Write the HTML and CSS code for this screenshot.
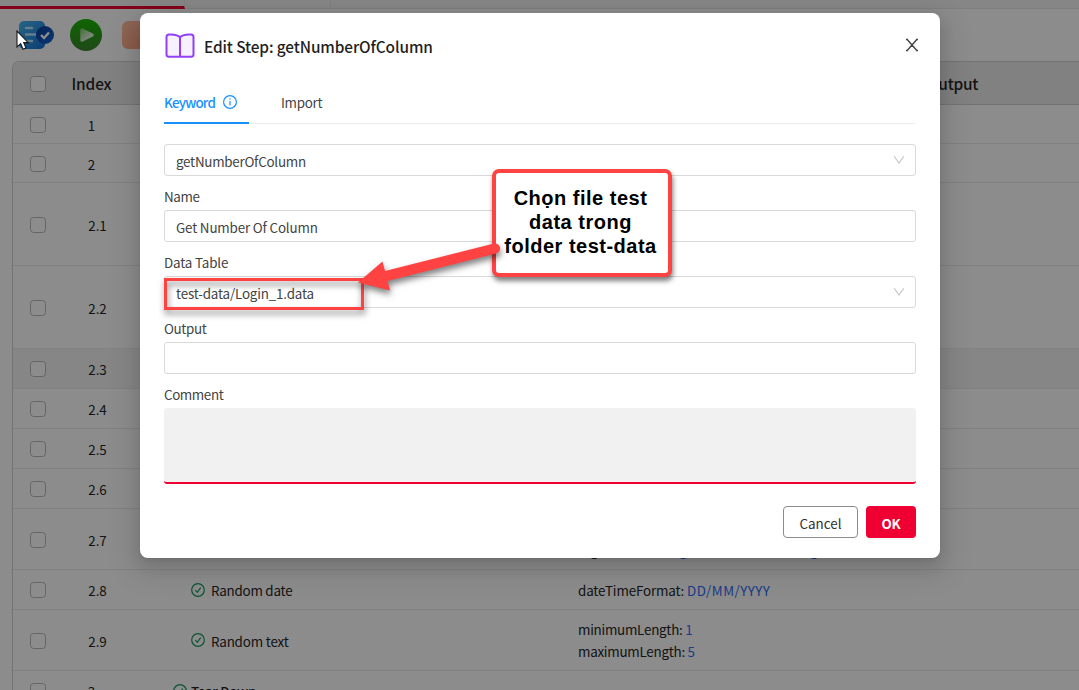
FILE: index.html
```html
<!DOCTYPE html>
<html lang="en">
<head>
<meta charset="utf-8">
<title>Edit Step</title>
<link rel="stylesheet" href="styles.css">
</head>
<body>
<svg class="defs" width="0" height="0">
  <defs>
    <linearGradient id="doc" x1="0" y1="0" x2="1" y2="1"><stop offset="0" stop-color="#48b8f0"/><stop offset="1" stop-color="#1370d6"/></linearGradient>
    <linearGradient id="badge" x1="0" y1="0" x2="1" y2="1"><stop offset="0" stop-color="#0a3f94"/><stop offset="1" stop-color="#1565d8"/></linearGradient>
    <linearGradient id="run" x1="0" y1="0" x2="0" y2="1"><stop offset="0" stop-color="#18b800"/><stop offset="1" stop-color="#3c8530"/></linearGradient>
    <linearGradient id="tri" x1="0" y1="0" x2="1" y2="1"><stop offset="0" stop-color="#8fd080"/><stop offset="1" stop-color="#ffffff"/></linearGradient>
    <symbol id="check" viewBox="0 0 14 14"><circle cx="7" cy="7" r="6.3"/><path d="M4.3 7.1 6.3 9.3 9.7 4.6"/></symbol>
    <symbol id="down" viewBox="0 0 12 10"><path d="M1.2 1.2 6 8 10.8 1.2"/></symbol>
  </defs>
</svg>
<div class="app">
  <div class="tabstrip"><span class="tab current"></span><span class="tab"></span></div>
  <div class="toolbar">
    <svg width="36" height="30" viewBox="0 0 36 30">
      <rect x="1" y="1" width="26" height="28" rx="5" fill="url(#doc)"/>
      <path d="M8 8h6M8 14.5h10M8 21h6" stroke="#b8e4ff" stroke-width="2.4" stroke-linecap="round"/>
      <circle cx="27" cy="15" r="9" fill="url(#badge)"/>
      <path d="m23 15 3 3 5-5.5" fill="none" stroke="#fff" stroke-width="2.4"/>
    </svg>
    <svg width="32" height="32" viewBox="0 0 32 32">
      <circle cx="16" cy="16" r="16" fill="url(#run)"/>
      <path d="M12 11 22 16 12 21Z" fill="url(#tri)" stroke="url(#tri)" stroke-width="3.5" stroke-linejoin="round"/>
    </svg>
    <span class="stop"></span>
  </div>
  <div class="grid">
    <div class="row head"><i class="box"></i><b>Index</b><span></span><span></span><span class="out">Output</span></div>
    <div class="row r39"><i class="box"></i><b>1</b></div>
    <div class="row r39"><i class="box"></i><b>2</b></div>
    <div class="row r83"><i class="box"></i><b class="sub">2.1</b></div>
    <div class="row r83"><i class="box"></i><b class="sub">2.2</b></div>
    <div class="row r40 hover"><i class="box"></i><b class="sub">2.3</b></div>
    <div class="row r40"><i class="box"></i><b class="sub">2.4</b></div>
    <div class="row r40"><i class="box"></i><b class="sub">2.5</b></div>
    <div class="row r40"><i class="box"></i><b class="sub">2.6</b></div>
    <div class="row r61"><i class="box"></i><b class="sub">2.7</b><span></span><span class="args"><span>minimumLength: <em>1</em></span><span class="a-long">regionFormat: <em>length of the decimal lang</em></span></span></div>
    <div class="row r40"><i class="box"></i><b class="sub">2.8</b><span class="step"><svg class="ok"><use href="#check"/></svg><span class="t-date">Random date</span></span><span class="args"><span class="a-format">dateTimeFormat: <em>DD/MM/YYYY</em></span></span></div>
    <div class="row r61"><i class="box"></i><b class="sub">2.9</b><span class="step"><svg class="ok"><use href="#check"/></svg><span class="t-text">Random text</span></span><span class="args"><span class="a-min">minimumLength: <em>1</em></span><span class="a-max">maximumLength: <em>5</em></span></span></div>
    <div class="row r40"><i class="box"></i><b>3</b><span class="step top"><svg class="ok"><use href="#check"/></svg><span>Tear Down</span></span></div>
  </div>
</div>
<div class="mask"></div>
<div class="modal">
  <div class="title">
    <svg width="30" height="26" viewBox="0 0 30 26"><path d="M15 4.5C13.500 2 9.500 1.300 4 1.500 2.300 1.600 1.500 2.600 1.500 4V21.500C1.500 23 2.300 23.700 4 23.700H26C27.700 23.700 28.500 23 28.500 21.500V4C28.500 2.600 27.700 1.600 26 1.500 20.500 1.300 16.500 2 15 4.500ZM15 4.500V23.500" fill="#f6f0ff" stroke="#923ff8" stroke-width="2" stroke-linejoin="round"/></svg>
    <h1>Edit Step: getNumberOfColumn</h1>
    <svg class="close" width="14" height="14" viewBox="0 0 14 14"><path d="M2.200 1.500 11.800 12.500M11.800 1.500 2.200 12.500M1 1.500H3.200M10.800 1.500H13M1 12.500H3.200M10.800 12.500H13"/></svg>
  </div>
  <div class="tabs">
    <div class="t active"><span class="kw">Keyword</span><svg width="14" height="14" viewBox="0 0 14 14"><circle cx="7" cy="7" r="6.400"/><path d="M7 6v4.500M7 3.400v1.300"/></svg></div>
    <div class="t"><span class="imp">Import</span></div>
  </div>
  <div class="field"><span class="v1">getNumberOfColumn</span><svg class="arrow"><use href="#down"/></svg></div>
  <label class="l1">Name</label>
  <div class="field"><span class="v2">Get Number Of Column</span></div>
  <label class="l2">Data Table</label>
  <div class="field"><span class="v3">test-data/Login_1.data</span><svg class="arrow"><use href="#down"/></svg></div>
  <label class="l3">Output</label>
  <div class="field"></div>
  <label class="l4">Comment</label>
  <div class="area"></div>
  <div class="actions"><button class="cancel">Cancel</button><button class="primary">OK</button></div>
</div>
<div class="highlight"></div>
<div class="callout">Chọn file test<br>data trong<br>folder test-data</div>
<svg class="pointer" width="150" height="60" viewBox="350 240 150 60"><path d="M358 282.500 382.500 261.500 385 271 494 243.500A5 5 0 0 1 496 253.500L387.500 281 390 290.500Z"/></svg>
<svg class="cursor" width="16" height="22" viewBox="0 0 16 22"><path d="M1 1V17L4.700 13.600 7 19.200 10 18 7.700 12.600H12.300Z" fill="#fff" stroke="#16161c" stroke-width="1.100"/></svg>
</body>
</html>
```
FILE: styles.css
```css
* { box-sizing: border-box; }
body { margin: 0; width: 1079px; height: 690px; overflow: hidden; position: relative; background: #fff; font: 13.4px/22px "Noto Sans CJK JP", "Noto Sans", sans-serif; color: #262626; }
svg { display: block; flex: none; }
.defs { position: absolute; }
.app { height: 690px; overflow: hidden; }
.tabstrip { display: flex; height: 9px; background: #f5f5f5; border-bottom: 1px solid #e8e8e8; }
.tab { width: 146px; border-right: 1px solid #e8e8e8; }
.tab.current { width: 185px; height: 9px; border-bottom: 3px solid #f00032; }
.toolbar { display: flex; align-items: center; height: 52px; padding-left: 18px; gap: 16px; }
.stop { width: 30px; height: 28px; border-radius: 6px; background: linear-gradient(135deg, #ffc0a5, #ff9877); margin-left: 4px; }
.grid { margin-left: 12px; width: 1100px; border: 1px solid #d2d2d2; border-right: 0; border-radius: 7px 0 0 0; overflow: hidden; }
.row { display: grid; grid-template-columns: 50px 57px 458px 327px 1fr; align-items: center; border-bottom: 1px solid #ececec; }
.row b { font-weight: 400; text-align: center; padding-top: 1px; }
.row b.sub { padding-left: 12px; }
.head { height: 43px; background: #ececec; border-bottom-color: #d2d2d2; font-size: 15.4px; }
.head b { padding: 0; letter-spacing: -.1px; }
.row.head b, .out { font-weight: 500; }
.out { padding-left: 22px; letter-spacing: -.25px; }
.box { width: 16px; height: 16px; border: 1px solid #b8b8b8; border-radius: 3.500px; margin: 2px 0 0 17px; background: #fff; }
.r39 { height: 39px; }
.r40 { height: 40px; }
.r61 { height: 61px; }
.r83 { height: 83px; }
.r40 .box { margin-top: 0; }
.hover { background: #f5f5f5; }
.step { display: flex; align-items: center; gap: 6px; padding-left: 71px; }
.step.top { padding-left: 53px; gap: 4px; font-weight: 500; letter-spacing: -.3px; }
.step span { padding-top: 1px; }
.ok { width: 14px; height: 14px; fill: none; stroke: #159a60; stroke-width: 1.200; }
.t-date { letter-spacing: -.23px; }
.t-text { letter-spacing: -.18px; }
.args { display: flex; flex-direction: column; }
.args em { font-style: normal; color: #2f6df6; }
.a-format { letter-spacing: -.14px; }
.a-format em { letter-spacing: .45px; }
.a-min, .a-max { letter-spacing: -.25px; }
.a-long { letter-spacing: -.05px; }
.a-long em { letter-spacing: -.2px; margin-left: -9px; }
.mask { position: absolute; inset: 0; background: rgba(0, 0, 0, .45); }
.modal { position: absolute; left: 140px; top: 13px; width: 800px; height: 545px; padding: 0 24px; background: #fff; border-radius: 8px; box-shadow: 0 6px 16px rgba(0,0,0,.1), 0 3px 6px -4px rgba(0,0,0,.14), 0 9px 28px 8px rgba(0,0,0,.1); }
.title { display: flex; align-items: center; height: 66px; gap: 9px; padding-left: 1px; }
h1 { margin: 0; font-size: 15.4px; font-weight: 500; color: #1f1f1f; letter-spacing: -.11px; }
.close { margin: 0 -3px 2px auto; fill: none; stroke: #444; stroke-width: 1.400; }
.tabs { display: flex; gap: 32px; height: 45px; margin-bottom: 20px; border-bottom: 1px solid #ededed; }
.t { display: flex; align-items: center; height: 45px; color: #444; }
.t.active { width: 85px; gap: 8px; padding-top: 3px; color: #1890ff; border-bottom: 2px solid #1890ff; font-weight: 500; }
.t svg { fill: none; stroke: #1890ff; stroke-width: 1.200; }
.kw { letter-spacing: -.8px; }
.imp { letter-spacing: -.3px; }
.field { height: 32px; border: 1px solid #d9d9d9; border-radius: 3px; padding: 0 10px 0 11px; display: flex; align-items: center; justify-content: space-between; color: #434343; }
.field span { padding-top: 1px; }
.v1 { letter-spacing: -.26px; }
.v2 { letter-spacing: -.17px; }
.v3 { letter-spacing: -.17px; }
.l1 { letter-spacing: -.4px; }
.l2 { letter-spacing: -.15px; }
.l3 { letter-spacing: -.35px; }
.l4 { letter-spacing: -.4px; }
.arrow { width: 12px; height: 10px; fill: none; stroke: #c4c4c4; stroke-width: 1.100; }
label { display: block; width: fit-content; height: 34px; padding-top: 9px; color: #434343; }
.area { height: 76px; background: #f1f1f1; border-bottom: 2px solid #f00032; border-radius: 3px; }
.actions { display: flex; justify-content: flex-end; gap: 8px; margin-top: 22px; }
button { height: 32px; padding: 1px 0 0; border-radius: 4px; font: inherit; }
.cancel { width: 75px; background: #fff; border: 1px solid #8c8c8c; color: #303030; }
.primary { width: 50px; background: #f00032; border: 0; color: #fff; font-weight: 700; letter-spacing: -.3px; box-shadow: 0 2px 0 rgba(0,0,0,.04); }
.highlight { position: absolute; left: 164px; top: 278px; width: 200px; height: 32px; border: 3px solid #ff4242; filter: drop-shadow(1px 4px 3px rgba(0,0,0,.5)); }
.callout { position: absolute; left: 492px; top: 169px; width: 180px; height: 108px; border: 4px solid #ff4242; border-radius: 7px; background: #fff; padding: 13px 3px 0 0; text-align: center; font: bold 20px/24px "Liberation Sans", sans-serif; letter-spacing: .5px; color: #000; white-space: nowrap; box-shadow: 1px 4px 5px rgba(0,0,0,.5); }
.pointer { position: absolute; left: 350px; top: 240px; fill: #ff4242; filter: drop-shadow(1px 4px 3px rgba(0,0,0,.5)); overflow: visible; }
.cursor { position: absolute; left: 16px; top: 30px; }
```
